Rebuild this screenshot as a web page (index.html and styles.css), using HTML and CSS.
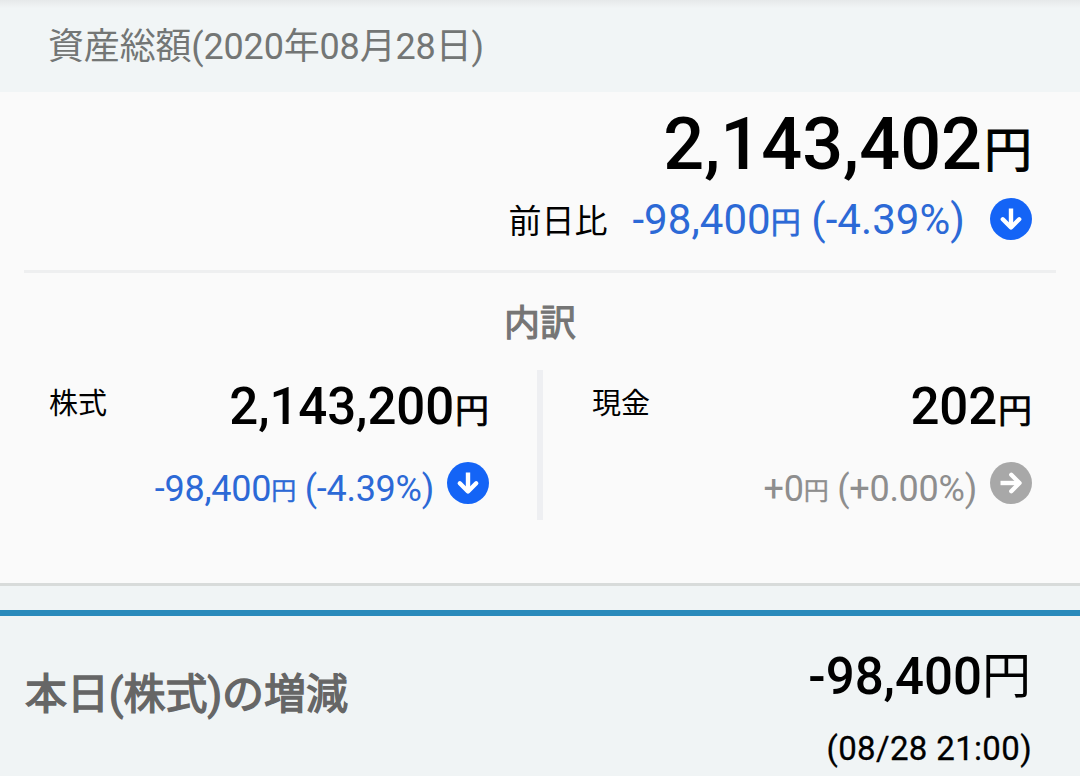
FILE: index.html
```html
<!DOCTYPE html>
<html lang="ja">
<head>
    <meta charset="UTF-8">
    <meta name="viewport" content="width=device-width, initial-scale=1.0">
    <title>資産総額</title>
    <link rel="stylesheet" href="styles.css">
</head>
<body>
    <!-- 見出し -->
    <header class="page-header">
        <h1>資産総額(2020年08月28日)</h1>
    </header>

    <!-- 資産サマリー -->
    <main class="summary">
        <section class="total">
            <p class="total-amount">2,143,402<span class="yen">円</span></p>
            <div class="total-change">
                <span class="label">前日比</span>
                <span class="change">-98,400<span class="yen">円</span> (-4.39%)</span>
                <svg class="icon" viewBox="0 0 42 42">
                    <circle cx="21" cy="21" r="21" fill="#1464f6"/>
                    <path d="M21 10.5V29"/>
                    <path class="head" d="M12.8 21.3l8.2 8.2 8.2-8.2"/>
                </svg>
            </div>
        </section>

        <h2 class="breakdown-title">内訳</h2>

        <div class="breakdown">
            <section class="item stock">
                <div class="item-row">
                    <h3>株式</h3>
                    <p class="amount">2,143,200<span class="yen">円</span></p>
                </div>
                <div class="item-change">
                    <span>-98,400<span class="yen">円</span> (-4.39%)</span>
                    <svg class="icon" viewBox="0 0 42 42">
                        <circle cx="21" cy="21" r="21" fill="#1464f6"/>
                        <path d="M21 10.5V29"/>
                        <path class="head" d="M12.8 21.3l8.2 8.2 8.2-8.2"/>
                    </svg>
                </div>
            </section>
            <section class="item cash">
                <div class="item-row">
                    <h3>現金</h3>
                    <p class="amount">202<span class="yen">円</span></p>
                </div>
                <div class="item-change">
                    <span>+0<span class="yen">円</span> (+0.00%)</span>
                    <svg class="icon" viewBox="0 0 42 42">
                        <circle cx="21" cy="21" r="21" fill="#a8a8a8"/>
                        <path d="M10.5 21H29"/>
                        <path class="head" d="M21.3 12.8l8.2 8.2-8.2 8.2"/>
                    </svg>
                </div>
            </section>
        </div>
    </main>

    <!-- 本日の増減 -->
    <section class="today">
        <h2>本日(株式)の増減</h2>
        <div class="today-value">
            <p class="today-amount">-98,400<span class="yen">円</span></p>
            <p class="today-time">(08/28 21:00)</p>
        </div>
    </section>
</body>
</html>
```

FILE: styles.css
```css
* {
    margin: 0;
    padding: 0;
    box-sizing: border-box;
}

body {
    height: 776px;
    overflow: hidden;
    background-color: #f0f4f5;
    color: #000;
    font-family: Roboto, "Noto Sans CJK JP", sans-serif;
    white-space: nowrap;
}

.icon {
    display: block;
    flex: none;
    width: 42px;
    height: 42px;
}

.icon path {
    fill: none;
    stroke: #fff;
    stroke-width: 4.4;
}

.icon .head {
    stroke-linecap: round;
    stroke-linejoin: round;
}

.yen {
    font-weight: 400;
    line-height: 1;
    vertical-align: 1px;
}

/* 見出し */
.page-header {
    height: 92px;
    padding-left: 48px;
    background: linear-gradient(#e6e9ea, #f1f5f6 8px);
}

.page-header h1 {
    color: #737675;
    font-size: 36px;
    font-weight: 400;
    letter-spacing: -0.17px;
    line-height: 94px;
}

/* 資産サマリー */
.summary {
    height: 494px;
    padding: 0 24px;
    background-color: #fafafa;
    border-bottom: 3px solid #d8dbda;
}

.total {
    height: 181px;
    padding: 14px 24px 0;
    border-bottom: 3px solid #eeeff0;
}

.total-amount {
    height: 80px;
    font-size: 72px;
    font-weight: 500;
    line-height: 78px;
    text-align: right;
}

.total-amount .yen {
    margin-left: 2px;
    font-size: 48px;
    vertical-align: 2px;
    -webkit-text-stroke: 0.9px;
}

.total-change {
    display: flex;
    align-items: center;
    justify-content: flex-end;
    height: 66px;
}

.total-change .label {
    margin-right: 25px;
    font-size: 33px;
}

.change {
    margin-right: 25px;
    color: #2c69d6;
    font-size: 42px;
    letter-spacing: 0.06px;
}

.change .yen {
    font-size: 30px;
    -webkit-text-stroke: 0.6px;
}

.breakdown-title {
    height: 97px;
    color: #757575;
    font-size: 36px;
    font-weight: 400;
    line-height: 102px;
    text-align: center;
    -webkit-text-stroke: 1.1px;
}

/* 株式・現金 */
.breakdown {
    display: grid;
    grid-template-columns: 519px 1fr;
    height: 150px;
}

.item {
    padding: 0 24px 0 48px;
}

.stock {
    padding: 0 48px 0 24px;
    border-right: 6px solid #eeeff2;
}

.item-row {
    display: flex;
    justify-content: space-between;
    height: 92px;
}

.item h3 {
    padding-left: 1px;
    font-size: 29px;
    font-weight: 400;
    line-height: 68px;
}

.amount {
    font-size: 51px;
    font-weight: 500;
    letter-spacing: -0.1px;
    line-height: 74px;
}

.amount .yen {
    margin-left: 1px;
    font-size: 34px;
    -webkit-text-stroke: 0.7px;
}

.item-change {
    display: flex;
    justify-content: flex-end;
    gap: 13px;
    height: 42px;
    font-size: 36px;
    letter-spacing: -0.25px;
    line-height: 54px;
}

.item-change .yen {
    font-size: 25px;
    -webkit-text-stroke: 0.4px;
}

.stock .item-change {
    color: #2c69d6;
}

.cash .item-change {
    color: #8e8e8e;
}

/* 本日の増減 */
.today {
    display: flex;
    justify-content: space-between;
    height: 166px;
    margin-top: 24px;
    padding: 0 48px 0 25px;
    border-top: 6px solid #2a8abb;
}

.today h2 {
    color: #666;
    font-size: 42px;
    font-weight: 400;
    line-height: 158px;
    -webkit-text-stroke: 1.4px;
}

.today-value {
    text-align: right;
}

.today-amount {
    height: 120px;
    font-size: 51px;
    font-weight: 500;
    line-height: 122px;
}

.today-amount .yen {
    margin-right: 1px;
    font-size: 49px;
}

.today-time {
    font-size: 33px;
    font-weight: 400;
    letter-spacing: 0.35px;
    line-height: 25px;
    -webkit-text-stroke: 0.3px;
}
```
